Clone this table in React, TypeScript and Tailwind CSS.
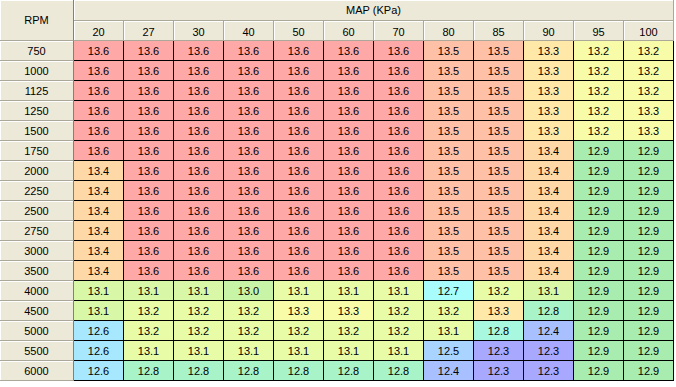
const cols = ["20", "27", "30", "40", "50", "60", "70", "80", "85", "90", "95", "100"];

// colour codes for each cell
const palette: Record<string, string> = {
  R: "bg-[#ffa8a8]",
  S: "bg-[#ffc0a8]",
  P: "bg-[#ffd8a8]",
  O: "bg-[#ffe8a8]",
  Y: "bg-[#f8fca8]",
  L: "bg-[#e8fca8]",
  K: "bg-[#d8f8a8]",
  H: "bg-[#c8f4a8]",
  G: "bg-[#a8ecb0]",
  M: "bg-[#a8f4c8]",
  A: "bg-[#a8f8e0]",
  C: "bg-[#a8fcfc]",
  B: "bg-[#a8e8ff]",
  D: "bg-[#a8d4ff]",
  E: "bg-[#a8c0ff]",
  V: "bg-[#a8a8ff]",
};

type Row = { rpm: string; values: string[]; colors: string };

const rich = ["13.6", "13.6", "13.6", "13.6", "13.6", "13.6", "13.6", "13.5", "13.5"];
const mid = ["13.4", "13.6", "13.6", "13.6", "13.6", "13.6", "13.6", "13.5", "13.5", "13.4", "12.9", "12.9"];

const rows: Row[] = [
  { rpm: "750", values: [...rich, "13.3", "13.2", "13.2"], colors: "RRRRRRRSSOYY" },
  { rpm: "1000", values: [...rich, "13.3", "13.2", "13.2"], colors: "RRRRRRRSSOYY" },
  { rpm: "1125", values: [...rich, "13.3", "13.2", "13.2"], colors: "RRRRRRRSSOYY" },
  { rpm: "1250", values: [...rich, "13.3", "13.2", "13.3"], colors: "RRRRRRRSSOYY" },
  { rpm: "1500", values: [...rich, "13.3", "13.2", "13.3"], colors: "RRRRRRRSSOYY" },
  { rpm: "1750", values: [...rich, "13.4", "12.9", "12.9"], colors: "RRRRRRRSSPGG" },
  { rpm: "2000", values: mid, colors: "PRRRRRRSSPGG" },
  { rpm: "2250", values: mid, colors: "PRRRRRRSSPGG" },
  { rpm: "2500", values: mid, colors: "PRRRRRRSSPGG" },
  { rpm: "2750", values: mid, colors: "PRRRRRRSSPGG" },
  { rpm: "3000", values: mid, colors: "PRRRRRRSSPGG" },
  { rpm: "3500", values: mid, colors: "PRRRRRRSSPGG" },
  {
    rpm: "4000",
    values: ["13.1", "13.1", "13.1", "13.0", "13.1", "13.1", "13.1", "12.7", "13.2", "13.1", "12.9", "12.9"],
    colors: "KKKHLLLCLKGG",
  },
  {
    rpm: "4500",
    values: ["13.1", "13.2", "13.2", "13.2", "13.3", "13.3", "13.2", "13.2", "13.3", "12.8", "12.9", "12.9"],
    colors: "KLLLYYLLOMGG",
  },
  {
    rpm: "5000",
    values: ["12.6", "13.2", "13.2", "13.2", "13.2", "13.2", "13.2", "13.1", "12.8", "12.4", "12.9", "12.9"],
    colors: "BLLLLLLLAEGG",
  },
  {
    rpm: "5500",
    values: ["12.6", "13.1", "13.1", "13.1", "13.1", "13.1", "13.1", "12.5", "12.3", "12.3", "12.9", "12.9"],
    colors: "BLLLLLLDVVGG",
  },
  {
    rpm: "6000",
    values: ["12.6", "12.8", "12.8", "12.8", "12.8", "12.8", "12.8", "12.4", "12.3", "12.3", "12.9", "12.9"],
    colors: "BMMMMMMEVVGG",
  },
];

const head =
  "flex items-center justify-center bg-[#ece9d8] border-r border-b border-[#aca899] shadow-[inset_1px_1px_0_#ffffff]";

export default function App() {
  return (
    <div className="w-[676px] h-[387px] bg-white font-['Liberation_Sans',Arial,sans-serif] text-[11px] leading-none text-black">
      <div className="grid w-[674px] grid-cols-[74px_repeat(12,50px)] grid-rows-[21px_20px_repeat(17,20px)]">
        <div className={`${head} row-span-2 border-r-[#808080]`}>RPM</div>
        <div className={`${head} col-span-12`}>MAP (KPa)</div>
        {cols.map((c) => (
          <div key={c} className={`${head} pt-[3px]`}>
            {c}
          </div>
        ))}
        {rows.map((row) => (
          <Line key={row.rpm} row={row} />
        ))}
      </div>
    </div>
  );
}

function Line({ row }: { row: Row }) {
  return (
    <>
      <div className={`${head} border-r-[#808080] pt-[2px]`}>{row.rpm}</div>
      {row.values.map((v, i) => (
        <div
          key={i}
          className={`flex items-center justify-center border-r border-b border-black pt-[2px] ${palette[row.colors[i]]}`}
        >
          {v}
        </div>
      ))}
    </>
  );
}
